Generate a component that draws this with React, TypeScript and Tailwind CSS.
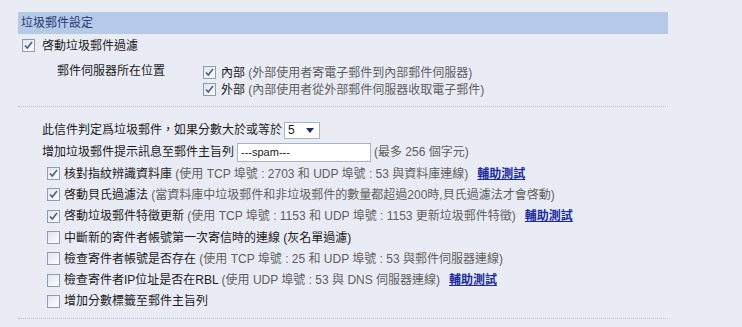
import React from "react";

const Check = ({ checked }: { checked: boolean }) => (
  <span className="inline-flex w-[13px] h-[13px] shrink-0 border border-[#8f9bb3] bg-gradient-to-br from-[#e2e4e9] to-[#ffffff] items-center justify-center">
    {checked && (
      <svg width="11" height="11" viewBox="0 0 11 11">
        <path d="M2 5.5 L4.3 8 L9 2" fill="none" stroke="#44608f" strokeWidth="1.6" />
      </svg>
    )}
  </span>
);

const Grey = ({ children }: { children: React.ReactNode }) => (
  <span className="text-[#5e5e5e]">{children}</span>
);

const Link = ({ children }: { children: React.ReactNode }) => (
  <a className="text-[#1a2a9c] underline font-bold ml-[9px]" href="#">
    {children}
  </a>
);

const CRow = ({
  checked,
  label,
  children,
}: {
  checked: boolean;
  label: string;
  children?: React.ReactNode;
}) => (
  <div className="h-[21.3px] flex items-center pl-[29px]">
    <Check checked={checked} />
    <span className="ml-[4px] whitespace-nowrap">
      {label}
      {children}
    </span>
  </div>
);

export default function App() {
  return (
    <div
      className="w-[742px] h-[327px] bg-[#e9ecf5] pt-[12px] pl-[18px] text-[12px] text-[#1b1b1b] leading-[14px] overflow-hidden"
      style={{ fontFamily: '"Liberation Sans", "Noto Sans CJK TC", sans-serif' }}
    >
      <div className="w-[650px]">
        <div className="h-[22px] bg-[#b6c9e8] text-[#253a70] flex items-center pl-[3px]">
          垃圾郵件設定
        </div>
        <div className="h-[21px] flex items-center pl-[4px] mt-[1px]">
          <Check checked />
          <span className="ml-[7px]">啓動垃圾郵件過濾</span>
        </div>
        <div className="flex mt-[6px]">
          <div className="w-[185px] pl-[39px] h-[17px] flex items-center">
            郵件伺服器所在位置
          </div>
          <div className="flex flex-col mt-[2px]">
            <div className="h-[17px] flex items-center">
              <Check checked />
              <span className="ml-[5px]">
                內部 <Grey>(外部使用者寄電子郵件到內部郵件伺服器)</Grey>
              </span>
            </div>
            <div className="h-[17px] flex items-center">
              <Check checked />
              <span className="ml-[5px]">
                外部 <Grey>(內部使用者從外部郵件伺服器收取電子郵件)</Grey>
              </span>
            </div>
          </div>
        </div>
        <div className="mt-[8px] border-t border-dotted border-[#b9bfcc]" />
        <div className="pt-[13px]">
          <div className="h-[20px] flex items-center pl-[24px]">
            <span>此信件判定爲垃圾郵件，如果分數大於或等於</span>
            <span className="ml-[2px] w-[36px] h-[17px] bg-white border border-[#a9b3c6] flex items-center justify-between pl-[3px] pr-[5px]">
              <span>5</span>
              <svg width="8" height="5" viewBox="0 0 8 5">
                <path d="M0 0 L8 0 L4 5 Z" fill="#1e2d6b" />
              </svg>
            </span>
          </div>
          <div className="h-[22px] flex items-center pl-[24px] mt-[1px]">
            <span>增加垃圾郵件提示訊息至郵件主旨列</span>
            <span className="ml-[3px] w-[134px] h-[19px] bg-white border border-[#a9b3c6] flex items-center pl-[3px] text-[11px]">
              ---spam---
            </span>
            <span className="ml-[3px]">
              <Grey>(最多 256 個字元)</Grey>
            </span>
          </div>
          <CRow checked label="核對指紋辨識資料庫 ">
            <Grey>(使用 TCP 埠號 : 2703 和 UDP 埠號 : 53 與資料庫連線)</Grey>
            <Link>輔助測試</Link>
          </CRow>
          <CRow checked label="啓動貝氏過濾法 ">
            <Grey>(當資料庫中垃圾郵件和非垃圾郵件的數量都超過200時,貝氏過濾法才會啓動)</Grey>
          </CRow>
          <CRow checked label="啓動垃圾郵件特徵更新 ">
            <Grey>(使用 TCP 埠號 : 1153 和 UDP 埠號 : 1153 更新垃圾郵件特徵)</Grey>
            <Link>輔助測試</Link>
          </CRow>
          <CRow checked={false} label="中斷新的寄件者帳號第一次寄信時的連線 (灰名單過濾)" />
          <CRow checked={false} label="檢查寄件者帳號是否存在 ">
            <Grey>(使用 TCP 埠號 : 25 和 UDP 埠號 : 53 與郵件伺服器連線)</Grey>
          </CRow>
          <CRow checked={false} label="檢查寄件者IP位址是否在RBL ">
            <Grey>(使用 UDP 埠號 : 53 與 DNS 伺服器連線)</Grey>
            <Link>輔助測試</Link>
          </CRow>
          <CRow checked={false} label="增加分數標籤至郵件主旨列" />
        </div>
        <div className="mt-[6px] border-t border-dotted border-[#b9bfcc]" />
      </div>
    </div>
  );
}
